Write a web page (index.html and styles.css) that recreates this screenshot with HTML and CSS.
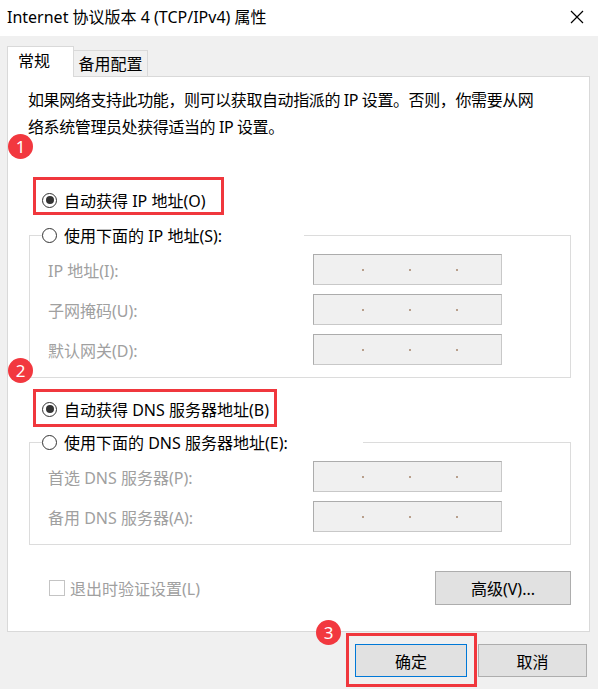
FILE: index.html
```html
<!DOCTYPE html>
<html lang="zh-CN">
<head>
    <meta charset="UTF-8">
    <title>Internet 协议版本 4 (TCP/IPv4) 属性</title>
    <link rel="stylesheet" href="styles.css">
</head>
<body>

<div class="titlebar">
    <span class="title">Internet 协议版本 4 (TCP/IPv4) 属性</span>
    <svg class="close" width="14" height="14" viewBox="0 0 14 14">
        <path d="M1 1 L13 13 M13 1 L1 13" stroke="#000" stroke-width="1.2" fill="none"/>
    </svg>
</div>

<div class="dialog">
    <!-- tabs -->
    <div class="tabs">
        <div class="tab active">常规</div>
        <div class="tab">备用配置</div>
    </div>

    <div class="panel">
        <p class="desc">如果网络支持此功能，则可以获取自动指派的 IP 设置。否则，你需要从网<br>络系统管理员处获得适当的 IP 设置。</p>

        <!-- IP address -->
        <div class="mark mark-ip">
            <label class="radio"><span class="dot on"></span>自动获得 IP 地址(O)</label>
        </div>
        <fieldset class="group">
            <legend class="legend-ip"><label class="radio"><span class="dot"></span>使用下面的 IP 地址(S):</label></legend>
            <div class="row"><span class="lbl">IP 地址(I):</span><span class="ipbox"><i></i><i></i><i></i></span></div>
            <div class="row"><span class="lbl">子网掩码(U):</span><span class="ipbox"><i></i><i></i><i></i></span></div>
            <div class="row"><span class="lbl">默认网关(D):</span><span class="ipbox"><i></i><i></i><i></i></span></div>
        </fieldset>

        <!-- DNS -->
        <div class="mark mark-dns">
            <label class="radio"><span class="dot on"></span>自动获得 DNS 服务器地址(B)</label>
        </div>
        <fieldset class="group">
            <legend class="legend-dns"><label class="radio"><span class="dot"></span>使用下面的 DNS 服务器地址(E):</label></legend>
            <div class="row"><span class="lbl">首选 DNS 服务器(P):</span><span class="ipbox"><i></i><i></i><i></i></span></div>
            <div class="row"><span class="lbl">备用 DNS 服务器(A):</span><span class="ipbox"><i></i><i></i><i></i></span></div>
        </fieldset>

        <div class="foot">
            <label class="check"><span class="box"></span>退出时验证设置(L)</label>
            <button class="btn btn-adv">高级(V)...</button>
        </div>

        <span class="badge badge-1">1</span>
        <span class="badge badge-2">2</span>
    </div>

    <div class="actions">
        <div class="mark mark-ok">
            <button class="btn btn-ok">确定</button>
        </div>
        <button class="btn btn-cancel">取消</button>
        <span class="badge badge-3">3</span>
    </div>
</div>

</body>
</html>
```

FILE: styles.css
```css
body {
    margin: 0;
    width: 598px;
    height: 689px;
    overflow: hidden;
    background-color: #f0f0f0;
    font-family: "Noto Sans", "Noto Sans CJK SC", sans-serif;
    font-size: 16px;
    color: #000;
}
.titlebar {
    height: 36px;
    background-color: #fff;
    display: flex;
    align-items: center;
    padding: 0 14px 0 7px;
}
.title {
    flex: 1;
    line-height: 20px;
    margin-top: -2px;
}
.close {
    display: block;
    margin-top: -2px;
}
.dialog {
    position: relative;
    padding: 10px 8px 0 7px;
}

/* tabs */
.tabs {
    display: flex;
    align-items: flex-end;
    height: 30px;
}
.tab {
    height: 27px;
    line-height: 26px;
    width: 74px;
    box-sizing: border-box;
    text-align: center;
    border: 1px solid #d9d9d9;
    border-bottom: none;
    border-left: none;
    background-color: #f0f0f0;
    margin-bottom: -1px;
}
.tab.active {
    position: relative;
    z-index: 1;
    width: 67px;
    height: 31px;
    line-height: 28px;
    text-align: left;
    padding-left: 10px;
    background-color: #fff;
    border-left: 1px solid #d9d9d9;
}

/* panel */
.panel {
    position: relative;
    width: 583px;
    height: 556px;
    box-sizing: border-box;
    background-color: #fff;
    border: 1px solid #d9d9d9;
}
.desc {
    margin: 0;
    padding: 10px 0 0 20px;
    line-height: 27px;
    letter-spacing: -0.4px;
}
.radio {
    display: flex;
    align-items: center;
    height: 22px;
    white-space: nowrap;
}
.dot {
    width: 15px;
    height: 15px;
    border: 1px solid #333;
    border-radius: 50%;
    margin-right: 7px;
    box-sizing: border-box;
    position: relative;
    background-color: #fff;
}
.dot.on::after {
    content: "";
    position: absolute;
    left: 2.5px;
    top: 2.5px;
    width: 8px;
    height: 8px;
    border-radius: 50%;
    background-color: #333;
}

/* red highlight boxes */
.mark {
    border: 3px solid #f0373d;
    box-sizing: border-box;
}
.mark-ip {
    width: 191px;
    height: 38px;
    margin: 36px 0 0 25px;
    padding: 9px 0 0 6px;
}
.mark-dns {
    width: 244px;
    height: 38px;
    margin: 11px 0 0 25px;
    padding: 6px 0 0 6px;
}

/* group boxes */
.group {
    margin: 9px 0 0 21px;
    padding: 0 0 12px 0;
    width: 542px;
    box-sizing: border-box;
    border: 1px solid #dcdcdc;
}
.mark-dns + .group {
    margin-top: 4px;
}
.group legend {
    padding: 0;
    margin-left: 12px;
    background-color: #fff;
}
.legend-ip {
    width: 262px;
}
.legend-dns {
    width: 321px;
}
.row {
    display: flex;
    align-items: center;
    height: 31px;
    margin-top: 9px;
}
.group legend + .row {
    margin-top: 8px;
}
.lbl {
    width: 265px;
    padding-left: 18px;
    color: #a0a0a0;
    white-space: nowrap;
}
.ipbox {
    width: 189px;
    height: 31px;
    box-sizing: border-box;
    border: 1px solid #acacac;
    border-right-color: #c8c8c8;
    border-bottom-color: #c8c8c8;
    background-color: #f0f0f0;
    display: flex;
    align-items: center;
    padding-left: 48px;
    gap: 45px;
}
.ipbox i {
    width: 2px;
    height: 2px;
    background-color: #b89f8c;
}

/* bottom of panel */
.foot {
    display: flex;
    align-items: center;
    height: 34px;
    margin-top: 26px;
    padding: 0 18px 0 41px;
}
.check {
    flex: 1;
    display: flex;
    align-items: center;
    color: #a0a0a0;
}
.box {
    width: 16px;
    height: 16px;
    box-sizing: border-box;
    border: 1px solid #c4c4c4;
    margin-right: 5px;
}
.btn {
    font-family: inherit;
    font-size: 16px;
    color: #000;
    background-color: #e1e1e1;
    border: 1px solid #adadad;
    padding: 0;
    cursor: pointer;
}
.btn-adv {
    width: 136px;
    height: 34px;
}

/* dialog buttons */
.actions {
    position: relative;
    display: flex;
    justify-content: flex-end;
    align-items: flex-start;
    padding: 1px 3px 0 0;
}
.mark-ok {
    width: 131px;
    height: 54px;
    padding: 8px 0 0 6px;
}
.btn-ok {
    width: 112px;
    height: 33px;
    border-color: #0078d7;
}
.btn-cancel {
    width: 109px;
    height: 33px;
    margin: 11px 0 0 1px;
}

/* numbered markers */
.badge {
    position: absolute;
    width: 25px;
    height: 25px;
    border-radius: 50%;
    background-color: #f2383f;
    color: #fff;
    font-size: 17px;
    line-height: 25px;
    text-align: center;
}
.badge-1 {
    left: 0;
    top: 57px;
}
.badge-2 {
    left: 0;
    top: 281px;
}
.badge-3 {
    left: 309px;
    top: -12px;
}
```
